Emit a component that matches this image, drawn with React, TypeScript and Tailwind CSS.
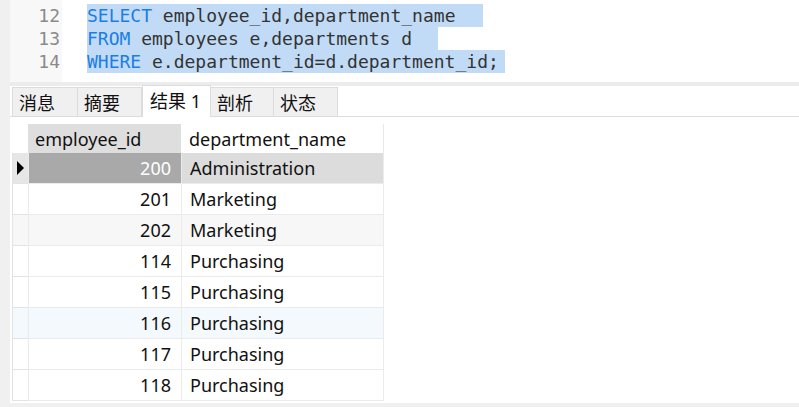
import React from 'react';

const mono = { fontFamily: '"DejaVu Sans Mono", "Liberation Mono", monospace' };
const ui = { fontFamily: '"Noto Sans", "Noto Sans CJK SC", sans-serif' };

const rows = [
  { id: 200, name: 'Administration' },
  { id: 201, name: 'Marketing' },
  { id: 202, name: 'Marketing' },
  { id: 114, name: 'Purchasing' },
  { id: 115, name: 'Purchasing' },
  { id: 116, name: 'Purchasing' },
  { id: 117, name: 'Purchasing' },
  { id: 118, name: 'Purchasing' },
];

const tabs = [
  { label: '消息', w: 'w-[66px]' },
  { label: '摘要', w: 'w-[65px]' },
  { label: '结果 1', w: 'w-[69px]', active: true },
  { label: '剖析', w: 'w-[64px]' },
  { label: '状态', w: 'w-[65px]' },
];

function rowBg(i: number) {
  if (i === 2) return 'bg-[#f7f7f7]';
  if (i === 5) return 'bg-[#f4f9fd]';
  return 'bg-white';
}

export default function App() {
  return (
    <div className="w-[799px] h-[407px] bg-[#f0f0f0] pl-[10px] flex flex-col overflow-hidden">
      {/* editor */}
      <div className="h-[82px] bg-white flex text-[18px] leading-[23px] pt-[4px]" style={mono}>
        <div className="w-[52px] -mt-[4px] pt-[4px] bg-[#f8f8f8] text-[#8a8a8a] text-right pr-[2px]">
          <div>12</div>
          <div>13</div>
          <div>14</div>
        </div>
        <div className="pl-[25px] text-[#333] whitespace-pre">
          <div className="bg-[#c1dbf6] w-[396px]">
            <span className="text-[#1a7ee6]">SELECT</span> employee_id,department_name
          </div>
          <div className="bg-[#c1dbf6] w-[351px]">
            <span className="text-[#1a7ee6]">FROM</span> employees e,departments d
          </div>
          <div className="bg-[#c1dbf6] w-[418px]">
            <span className="text-[#1a7ee6]">WHERE</span> e.department_id=d.department_id;
          </div>
        </div>
      </div>

      <div className="h-[4px] bg-[#ececec]" />

      {/* tabs */}
      <div className="h-[31px] bg-white border-b border-[#dcdcdc] flex items-end pl-[2px] text-[18px] text-[#111]" style={ui}>
        {tabs.map((t) =>
          t.active ? (
            <div
              key={t.label}
              className={`${t.w} h-[32px] -mb-px bg-white border border-b-0 border-[#dcdcdc] pl-[7px] leading-[30px]`}
            >
              {t.label}
            </div>
          ) : (
            <div
              key={t.label}
              className={`${t.w} h-[29px] bg-[#f0f0f0] border-t border-l border-r border-[#dcdcdc] -ml-px first:ml-0 pl-[6px] leading-[31px]`}
            >
              {t.label}
            </div>
          )
        )}
      </div>

      {/* grid */}
      <div className="flex-1 bg-white pt-[7px] pl-[2px]" style={ui}>
        <div className="w-[372px] text-[18px] text-[#111]">
          <div className="flex h-[29px]">
            <div className="w-[16px] bg-white" />
            <div className="w-[153px] bg-[#dedede] pl-[7px] leading-[30px]">employee_id</div>
            <div className="w-[203px] bg-white pl-[8px] leading-[30px] border-r border-[#e8e8e8]">department_name</div>
          </div>
          {rows.map((r, i) => {
            const sel = i === 0;
            return (
              <div key={r.id} className={`flex h-[31px] ${sel ? '' : rowBg(i)}`}>
                <div
                  className={`w-[16px] border-l border-b border-[#e3e3e3] flex items-center justify-center ${
                    sel ? 'bg-[#e6e6e6]' : ''
                  }`}
                >
                  {sel && (
                    <svg width="9" height="14" viewBox="0 0 9 14">
                      <path d="M1 0 L8 7 L1 14 Z" fill="#000" />
                    </svg>
                  )}
                </div>
                <div
                  className={`w-[153px] text-right pr-[10px] leading-[31px] border-l border-b border-[#ebebeb] ${
                    sel ? 'bg-[#a9a9a9] text-white' : ''
                  }`}
                >
                  {r.id}
                </div>
                <div
                  className={`w-[203px] pl-[8px] leading-[31px] border-l border-r border-b border-[#ebebeb] ${
                    sel ? 'bg-[#dcdcdc]' : ''
                  }`}
                >
                  {r.name}
                </div>
              </div>
            );
          })}
        </div>
      </div>
      <div className="h-[4px] bg-[#f0f0f0]" />
    </div>
  );
}
